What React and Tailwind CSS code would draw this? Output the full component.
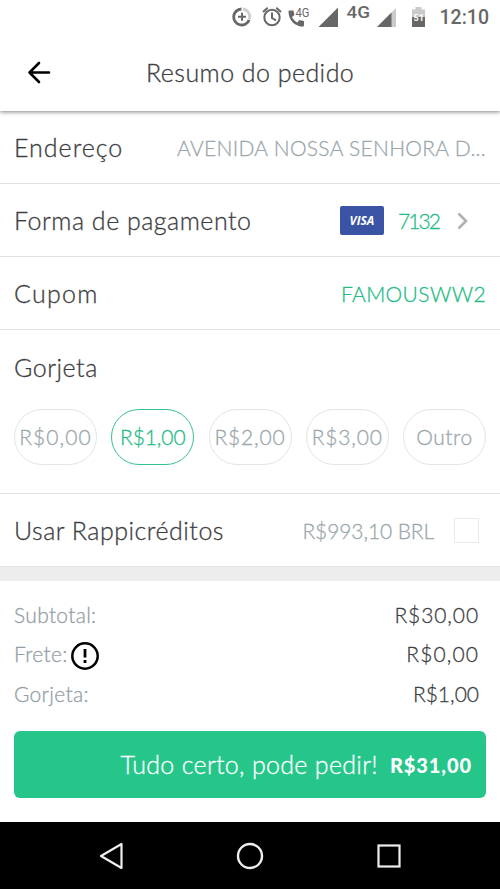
import React from "react";

const tips = [
  { label: "R$0,00", text: "tracking-[1.1px]" },
  { label: "R$1,00", text: "tracking-[-0.1px]", active: true },
  { label: "R$2,00", text: "tracking-[0.8px]" },
  { label: "R$3,00", text: "tracking-[0.8px]" },
  { label: "Outro", text: "tracking-[0.6px]" },
];

const StatusBar = () => (
  <div className="h-[35px] shrink-0 relative z-10 bg-white flex items-start text-[#676767] [-webkit-text-stroke:0px]">
    <svg width="200" height="35" viewBox="0 0 200 35" className="ml-[230px]" fill="none" stroke="currentColor">
      {/* data saver */}
      <path d="M11.5 9a8 8 0 1 0 7.6 11" strokeWidth="2.8" />
      <path d="M13 9a8 8 0 0 1 6.3 10.5" stroke="#cfcfcf" strokeWidth="2.8" />
      <path d="M12 12.8v8M8 16.8h8" strokeWidth="2" />
      {/* alarm */}
      <circle cx="42" cy="17.5" r="7.7" strokeWidth="2" />
      <path d="M42 12.5v5.5l4 2.4M33 12l4.7-4.3M51 12l-4.7-4.3" strokeWidth="2" />
      {/* volte call */}
      <path d="M59.5 10.5h4l.9 4.6-2.4 2c1.3 2.6 3 4.2 5.3 5.5l2-2.5 4.7 1v4c0 1-.6 1.6-1.6 1.6C64.8 26.5 58.500 20 58.500 11.6c0-.6.4-1.1 1-1.1z" fill="currentColor" stroke="none" />
      {/* signal bars */}
      <path d="M88.5 27h19.5V7.5z" fill="currentColor" stroke="none" />
      <path d="M147 27h19V8z" fill="#cacaca" stroke="none" />
      <path d="M147 27h14.500V12.500z" fill="currentColor" stroke="none" />
      {/* battery */}
      <path d="M182 9.5h3.500V7h6v2.500h3.500v8h-13z" fill="#cacaca" stroke="none" />
      <path d="M182 17h13v10h-13z" fill="currentColor" stroke="none" />
      <text x="65.500" y="17" fontSize="12" className="font-['Roboto'] font-normal" fill="currentColor" stroke="none" textLength="14" lengthAdjust="spacingAndGlyphs">4G</text>
      <text x="116.500" y="18" fontSize="17" className="font-['Roboto'] font-medium" fill="currentColor" stroke="none" textLength="23.500" lengthAdjust="spacingAndGlyphs">4G</text>
      <text x="183.500" y="20.500" fontSize="9" className="font-['Roboto'] font-bold" fill="#fff" stroke="none">51</text>
    </svg>
    <span className="font-['Roboto'] font-medium text-[19.5px] leading-[35px] ml-[9.5px]">12:10</span>
  </div>
);

const Row = ({ label, labelClass, children }) => (
  <div className="h-[73px] shrink-0 border-b border-[#e1e2e2] px-[14px] pt-px flex items-center justify-between">
    <span className={labelClass}>{label}</span>
    {children}
  </div>
);

const TotalRow = ({ label, labelClass, value, valueClass, children }) => (
  <div className="h-[39.5px] flex items-center justify-between pr-[21px] pl-[14px]">
    <div className="flex items-center text-[#93a0a6]">
      <span className={labelClass}>{label}</span>
      {children}
    </div>
    <span className={valueClass}>{value}</span>
  </div>
);

const App = () => {
  return (
    <div className="w-[500px] h-[889px] bg-white flex flex-col overflow-hidden font-['Lato',sans-serif] font-light text-[#3d4042] text-[25px] whitespace-nowrap [-webkit-text-stroke:0.3px]">
      <StatusBar />

      <header className="h-[76px] shrink-0 flex items-center shadow-[0_1px_4px_rgba(0,0,0,0.5)]">
        <svg width="24" height="24" viewBox="0 0 24 24" className="ml-[27px]" fill="none" stroke="#000" strokeWidth="2.6" strokeLinecap="round" strokeLinejoin="round">
          <path d="M22 11.5H2.5M12 2l-9.500 9.500 9.500 9.500" />
        </svg>
        <h1 className="ml-[95px] -mt-px tracking-[0.45px]">Resumo do pedido</h1>
      </header>

      <Row label="Endereço" labelClass="tracking-[1px]">
        <span className="text-[21px] text-[#9ba7ac] tracking-[0.3px]">AVENIDA NOSSA SENHORA D...</span>
      </Row>
      <Row label="Forma de pagamento" labelClass="tracking-[0.5px]">
        <div className="flex items-center mr-[18px]">
          <span className="w-[44px] h-[29px] rounded-[2px] bg-[#3a53a4] text-white font-['Open_Sans'] font-bold italic text-[12px] flex items-center justify-center [-webkit-text-stroke:0px]">VISA</span>
          <span className="ml-[14px] w-[40px] text-[21px] text-[#26bb85] tracking-[-1.9px]">7132</span>
          <svg width="11" height="18" viewBox="0 0 11 18" className="ml-[19px]" fill="none" stroke="#b0b0b0" strokeWidth="2.6">
            <path d="M1.5 1.500L9 9l-7.500 7.500" />
          </svg>
        </div>
      </Row>
      <Row label="Cupom" labelClass="tracking-[1.3px]">
        <span className="text-[21px] text-[#26bb85] tracking-[0.4px]">FAMOUSWW2</span>
      </Row>

      <section className="h-[164px] shrink-0 border-b border-[#e1e2e2] px-[14px] pt-[22px]">
        <h2 className="leading-[30px] tracking-[0.5px]">Gorjeta</h2>
        <div className="flex justify-between mt-[27px]">
          {tips.map((tip) => (
            <button
              key={tip.label}
              className={`w-[83px] h-[56px] rounded-full border flex items-center justify-center text-[21px] ${tip.text} ${tip.active ? "border-[#34c08f] text-[#26bb85]" : "border-[#e3e4e5] text-[#9ba7ac]"}`}
            >
              {tip.label}
            </button>
          ))}
        </div>
      </section>

      <Row label="Usar Rappicréditos" labelClass="tracking-[0.5px]">
        <div className="flex items-center mr-[7px]">
          <span className="text-[21px] text-[#9ba7ac] tracking-[-0.1px]">R$993,10 BRL</span>
          <span className="w-[25px] h-[25px] ml-[20px] border border-[#e9eaea]" />
        </div>
      </Row>
      <div className="h-[14px] shrink-0 bg-[#ededed]" />

      <section className="pt-[14px] text-[21px]">
        <TotalRow label="Subtotal:" value="R$30,00" labelClass="tracking-[0.3px]" valueClass="tracking-[0.9px]" />
        <TotalRow label="Frete:" value="R$0,00" labelClass="-mt-[2px] tracking-[0.3px]" valueClass="-mt-[2px] tracking-[1.1px]">
          <svg width="28" height="28" viewBox="0 0 28 28" className="ml-[3px] mt-[4px]" fill="none" stroke="#000">
            <circle cx="14" cy="14" r="12.7" strokeWidth="2.5" />
            <path d="M14 7v8.500M14 18v3" strokeWidth="2.8" />
          </svg>
        </TotalRow>
        <TotalRow label="Gorjeta:" value="R$1,00" labelClass="tracking-[0.3px]" valueClass="" />
      </section>

      <button className="h-[67px] shrink-0 mx-[14px] mt-[17px] pr-[14px] pt-[2px] rounded-md bg-[#26c68b] text-white flex items-center justify-end">
        <span className="tracking-[0.3px]">Tudo certo, pode pedir!</span>
        <span className="ml-[12px] text-[20px] font-black tracking-[0.9px] [-webkit-text-stroke:0px]">R$31,00</span>
      </button>

      <nav className="h-[67px] shrink-0 mt-auto bg-black flex items-center">
        <svg width="24" height="28" viewBox="0 0 24 28" className="ml-[99px]" fill="none" stroke="#eee" strokeWidth="2.2" strokeLinejoin="round">
          <path d="M22.5 2v24L2 14z" />
        </svg>
        <svg width="28" height="28" viewBox="0 0 28 28" className="ml-[113px]" fill="none" stroke="#eee" strokeWidth="2.4">
          <circle cx="14" cy="14" r="12" />
        </svg>
        <svg width="24" height="24" viewBox="0 0 24 24" className="ml-[113px]" fill="none" stroke="#eee" strokeWidth="2.2">
          <rect x="1.5" y="1.500" width="21" height="21" />
        </svg>
      </nav>
    </div>
  );
};

export default App;
